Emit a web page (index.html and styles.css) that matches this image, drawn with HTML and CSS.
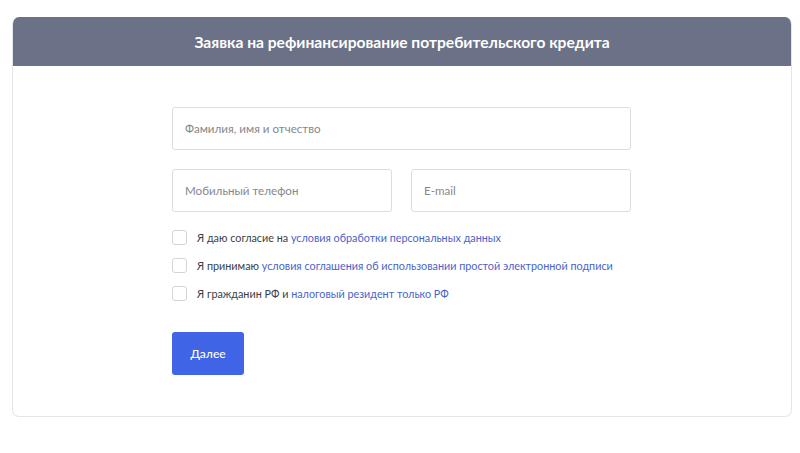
FILE: index.html
```html
<!DOCTYPE html>
<html lang="ru">
<head>
<meta charset="utf-8">
<link rel="stylesheet" href="styles.css">
</head>
<body>
<div class="card">
  <div class="card-header">Заявка на рефинансирование потребительского кредита</div>
  <div class="card-body">
    <form class="form">
      <div class="field"><span class="placeholder">Фамилия, имя и отчество</span></div>
      <div class="row">
        <div class="field"><span class="placeholder">Мобильный телефон</span></div>
        <div class="field"><span class="placeholder">E-mail</span></div>
      </div>
      <div class="checks">
        <label class="check"><span class="box"></span><span>Я даю согласие на <a class="link">условия обработки персональных данных</a></span></label>
        <label class="check"><span class="box"></span><span>Я принимаю <a class="link">условия соглашения об использовании простой электронной подписи</a></span></label>
        <label class="check"><span class="box"></span><span>Я гражданин РФ и <a class="link">налоговый резидент только РФ</a></span></label>
      </div>
      <div class="actions"><span class="btn">Далее</span></div>
    </form>
  </div>
</div>
</body>
</html>
```
FILE: styles.css
```css
html, body {
  margin: 0;
  padding: 0;
  background: #fff;
  font-family: "Lato", "Open Sans", "Liberation Sans", sans-serif;
}
.card {
  margin: 17px 0 0 12px;
  width: 780px;
  height: 400px;
  border: 1px solid #e4e5e8;
  border-top: none;
  border-radius: 7px;
  box-sizing: border-box;
  overflow: hidden;
}
.card-header {
  background: #6b7288;
  color: #fff;
  height: 49px;
  display: flex;
  align-items: center;
  justify-content: center;
  font-weight: 700;
  font-size: 15.6px;
  margin: 0 -1px;
}
.card-body {
  padding: 41px 0 0 159px;
}
.form {
  width: 459px;
  display: flex;
  flex-direction: column;
}
.field {
  height: 43px;
  border: 1px solid #dcdde1;
  border-radius: 3px;
  box-sizing: border-box;
  display: flex;
  align-items: center;
  padding-left: 12px;
  flex: none;
}
.row .field {
  flex: 1;
}
.placeholder {
  color: #85878d;
  font-size: 11.6px;
}
.row {
  display: flex;
  gap: 19px;
  margin-top: 19px;
}
.checks {
  margin-top: 17px;
  display: flex;
  flex-direction: column;
  gap: 12px;
}
.check {
  display: flex;
  align-items: center;
  gap: 10px;
  font-size: 10.8px;
  color: #3b3e45;
  height: 16px;
}
.box {
  width: 15px;
  height: 15px;
  border: 1px solid #d3d5da;
  border-radius: 3px;
  box-sizing: border-box;
  flex: none;
}
.link {
  color: #4a63c9;
}
.actions {
  margin-top: 31px;
}
.btn {
  display: inline-flex;
  align-items: center;
  justify-content: center;
  width: 72px;
  height: 43px;
  background: #3f65e6;
  color: #fff;
  border-radius: 3px;
  font-size: 12px;
  font-weight: 500;
}
```
